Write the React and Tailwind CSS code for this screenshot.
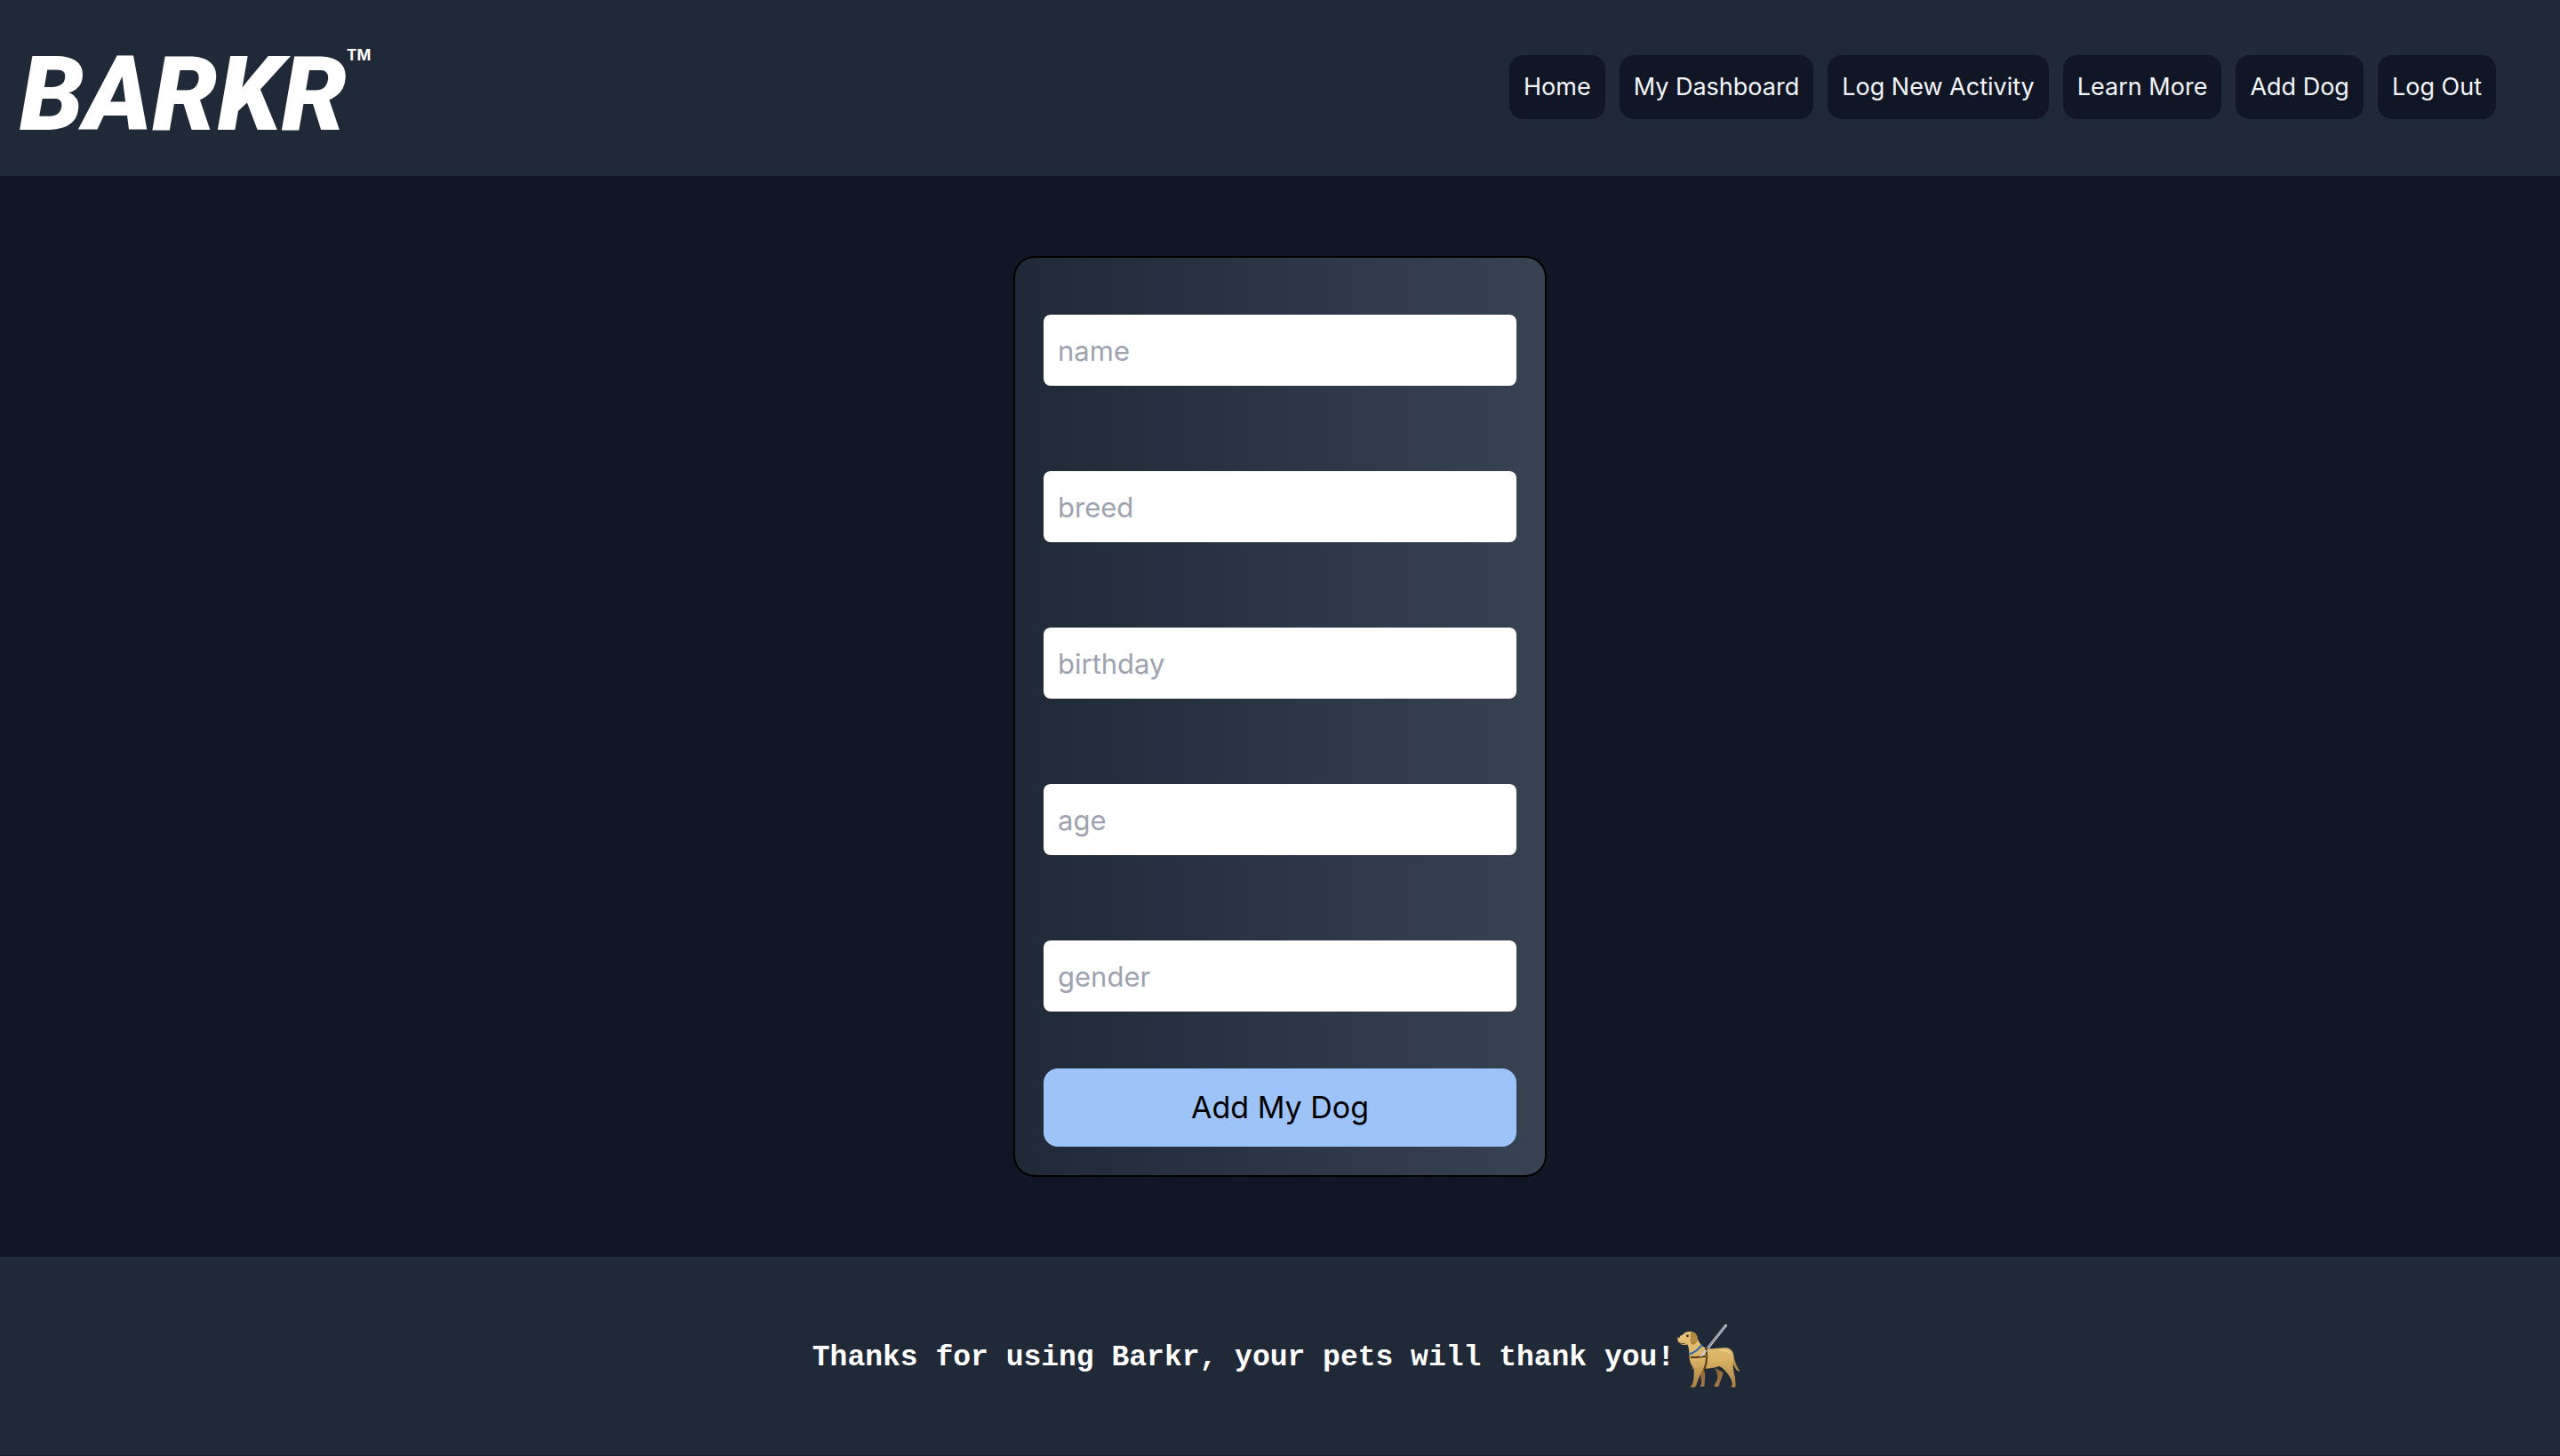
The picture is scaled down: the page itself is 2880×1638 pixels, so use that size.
const navItems = ["Home", "My Dashboard", "Log New Activity", "Learn More", "Add Dog", "Log Out"];
const fields = ["name", "breed", "birthday", "age", "gender"];

function Logo() {
  return (
    <a href="#home" aria-label="Barkr home" className="flex items-start pt-4 pl-[22px] text-white">
      <span className="font-[Roboto,sans-serif] text-[116px] leading-[120px] font-black italic">BARKR</span>
      <span className="mt-1.5 font-[Inter,sans-serif] text-[17px] leading-5 font-bold">TM</span>
    </a>
  );
}

function GuideDog() {
  return (
    <svg viewBox="20 26 216 220" className="h-[73px] w-[72px]" role="img" aria-label="Guide dog">
      <defs>
        <linearGradient id="coat" x1="0" y1="0" x2="0" y2="1">
          <stop offset="0" stopColor="#e6c47a" />
          <stop offset="0.5" stopColor="#d9b266" />
          <stop offset="1" stopColor="#a98043" />
        </linearGradient>
        <linearGradient id="farLeg" x1="0" y1="0" x2="0" y2="1">
          <stop offset="0" stopColor="#8c642f" />
          <stop offset="1" stopColor="#a57b4d" />
        </linearGradient>
      </defs>
      <path d="M104 172 C118 180 118 205 115 226 C114 235 117 240 108 240 C100 241 99 237 103 233 C106 218 100 200 98 184Z" fill="url(#farLeg)" />
      <path d="M150 176 C156 190 161 202 158 214 C155 226 146 234 148 239 C155 242 164 240 164 235 C168 220 176 208 178 192Z" fill="url(#farLeg)" />
      <path d="M206 124 C216 140 220 168 233 185 C236 190 227 190 220 179 C213 168 207 153 202 143Z" fill="#b98d4a" />
      <path
        d="M23 71 C30 68 41 66 45 60 C52 52 68 51 79 56 C88 61 91 80 98 91 C106 104 116 109 126 111 C150 113 174 105 193 109 C209 113 217 130 213 151 C209 169 213 188 218 208 L220 232 C222 240 219 243 210 242 C203 242 205 237 209 233 C208 216 199 203 188 190 C180 182 174 174 164 171 C148 177 130 180 112 178 C102 191 95 211 90 226 C86 237 86 243 76 242 C65 243 67 237 73 233 C79 215 79 199 79 181 C68 165 62 150 63 133 C63 118 61 107 57 97 C48 101 32 96 30 92 C23 87 24 78 23 71Z"
        fill="url(#coat)"
      />
      <path d="M70 178 C81 184 98 178 110 179" fill="none" stroke="#b88c48" strokeWidth="3" opacity="0.5" />
      <path d="M158 118 C178 111 196 113 205 130 C189 119 174 119 158 118Z" fill="#edcf8b" />
      <path d="M69 59 C77 54 89 59 90 72 C91 84 86 95 76 96 C67 95 68 85 69 76Z" fill="#b58a42" stroke="#946b2d" strokeWidth="2" />
      <ellipse cx="57" cy="68" rx="4" ry="4" fill="#2d2118" />
      <path d="M22 70 L32 68 L31 73 L25 75Z" fill="#272326" />
      <path d="M29 91 C36 95 43 95 49 92" fill="none" stroke="#59401f" strokeWidth="3" />
      <path d="M64 130 C81 124 94 114 106 98" fill="none" stroke="#2b6bb3" strokeWidth="6" />
      <path d="M67 140 C85 142 106 137 126 137 M121 111 L122 144 C121 163 118 172 114 181" fill="none" stroke="#573711" strokeWidth="6" />
      <path d="M100 138 L185 31 L190 32 L126 113 L104 137" fill="none" stroke="#c9cbd0" strokeWidth="4" strokeLinejoin="round" />
      <path d="M119 117 L184 36" stroke="#62666f" strokeWidth="2" />
      <circle cx="121" cy="112" r="5" fill="#5d3c17" />
      <circle cx="123" cy="137" r="4" fill="#8a7252" />
    </svg>
  );
}

export default function App() {
  return (
    <div className="flex min-h-screen flex-col border-b border-[#1c1830] bg-[#111627] font-[Inter,sans-serif]">
      <header className="flex min-h-[198px] items-center justify-between bg-[#202938] pb-0.5">
        <Logo />
        <nav className="flex gap-4 pr-[72px]">
          {navItems.map((item) => (
            <a
              key={item}
              href="#"
              className="rounded-2xl bg-[#111627] p-4 text-[27px] leading-10 text-slate-100"
            >
              {item}
            </a>
          ))}
        </nav>
      </header>

      <main className="flex justify-center py-[90px]">
        <form className="flex w-[600px] flex-col rounded-3xl border-2 border-black bg-linear-to-r from-[#202938] to-[#374253] px-8 pt-16 pb-8">
          <div className="flex flex-col gap-24">
            {fields.map((field) => (
              <input
                key={field}
                type="text"
                name={field}
                aria-label={field}
                placeholder={field}
                className="h-20 w-full rounded-lg bg-white px-4 text-[31px] text-black placeholder:text-[#9ea3af]"
              />
            ))}
          </div>
          <button type="submit" className="mt-16 rounded-2xl bg-[#9dc3f8] p-4 text-[34px] leading-14 text-black">
            Add My Dog
          </button>
        </form>
      </main>

      <footer className="flex flex-1 items-center justify-center bg-[#202938] text-white">
        <p className="flex items-center gap-0.5 pr-2 font-['Liberation_Mono',monospace] text-[33px] leading-10 font-bold">
          <span className="pt-1">Thanks for using Barkr, your pets will thank you!</span>
          <GuideDog />
        </p>
      </footer>
    </div>
  );
}
